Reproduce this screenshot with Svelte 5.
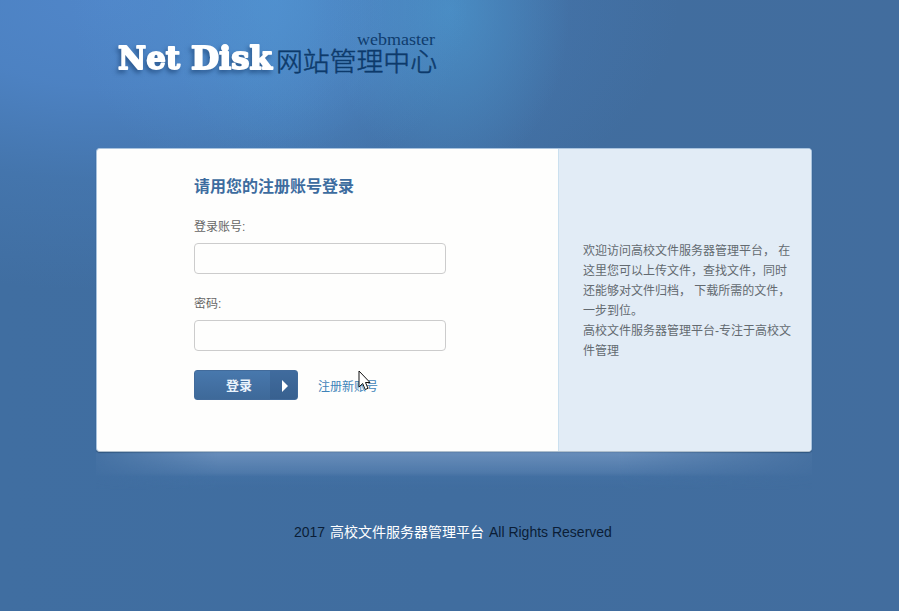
<script>
  const welcome = [
    '欢迎访问高校文件服务器管理平台， 在',
    '这里您可以上传文件，查找文件，同时',
    '还能够对文件归档， 下载所需的文件，',
    '一步到位。',
    '高校文件服务器管理平台-专注于高校文',
    '件管理'
  ];
  let account = $state('');
  let password = $state('');
</script>

<div class="page">
  <header>
    <svg class="logo" width="340" height="56" viewBox="0 0 340 56" aria-label="Net Disk">
      <g class="brand">
        <text x="11" y="41" textLength="62" lengthAdjust="spacingAndGlyphs">Net</text>
        <text x="84" y="41" textLength="81" lengthAdjust="spacingAndGlyphs">Disk</text>
      </g>
      <text class="master" x="250" y="17" textLength="78" lengthAdjust="spacingAndGlyphs">webmaster</text>
      <text class="center" x="169" y="43" textLength="161" lengthAdjust="spacingAndGlyphs">网站管理中心</text>
    </svg>
  </header>

  <main>
    <form onsubmit={(e) => e.preventDefault()}>
      <h1>请用您的注册账号登录</h1>
      <label for="account">登录账号:</label>
      <input id="account" type="text" bind:value={account} />
      <label for="password">密码:</label>
      <input id="password" type="password" bind:value={password} />
      <div class="actions">
        <button type="submit">
          <span>登录</span>
          <i><svg width="6" height="12" viewBox="0 0 6 12"><path d="M0 0L6 6L0 12Z" fill="#fff" /></svg></i>
        </button>
        <a href="#register">注册新账号</a>
      </div>
    </form>
    <aside>
      {#each welcome as line}
        <p>{line}</p>
      {/each}
    </aside>
  </main>
  <div class="reflection"></div>

  <footer><span>2017</span> <b>高校文件服务器管理平台</b> <span class="rights">All Rights Reserved</span></footer>

  <svg class="cursor" width="13" height="21" viewBox="0 0 13 21">
    <path d="M1 1V17L4.7 13.5L7.2 19.5L10 18.3L7.5 12.5H12Z" fill="#fff" stroke="#111" stroke-width="1" />
  </svg>
</div>

<style>
  :global(body) {
    margin: 0;
    overflow: hidden;
  }
  .page {
    position: relative;
    box-sizing: border-box;
    width: 899px;
    height: 611px;
    overflow: hidden;
    font-family: 'Liberation Sans', 'Noto Sans CJK SC', sans-serif;
    background:
      radial-gradient(ellipse 200px 190px at 270px 0, rgba(82, 148, 210, 0.6), transparent),
      radial-gradient(ellipse 110px 170px at 275px 0, rgba(76, 148, 208, 0.3), transparent),
      radial-gradient(ellipse 75px 150px at 275px 0, rgba(76, 148, 208, 0.2), transparent),
      radial-gradient(ellipse 120px 170px at 450px 10px, rgba(75, 148, 203, 0.75), transparent),
      radial-gradient(ellipse 570px 290px at 110px 0, #5086c9 0%, rgba(78, 132, 198, 0.9) 30%, rgba(72, 124, 184, 0.5) 62%, transparent 100%),
      linear-gradient(90deg, #406ea1, #406d9f 50%, #426d9e);
  }
  header {
    height: 148px;
    padding: 28px 0 0 107px;
    box-sizing: border-box;
  }
  .logo {
    display: block;
    overflow: visible;
  }
  .brand text {
    font: bold 31px 'DejaVu Serif', serif;
    fill: #fff;
    stroke: #fff;
    stroke-width: 1.8;
    stroke-linejoin: round;
  }
  .brand {
    filter: drop-shadow(-2px 3px 2px rgba(25, 65, 115, 0.6));
  }
  .master {
    font: 17px 'Liberation Serif', serif;
    fill: #0f3c6d;
  }
  .center {
    font: 300 26px 'Noto Sans CJK SC', sans-serif;
    fill: #0d3a6b;
    stroke: #0d3a6b;
    stroke-width: 0.5;
  }
  main {
    display: flex;
    box-sizing: border-box;
    width: 716px;
    height: 304px;
    margin-left: 96px;
    border: 1px solid #a9c3de;
    border-bottom-color: #b0bfcc;
    border-radius: 4px;
    overflow: hidden;
    background: #fefefd;
    box-shadow: 0 1px 1px #254c76;
  }
  form {
    flex: 1;
    padding: 24px 0 0 97px;
    display: flex;
    flex-direction: column;
  }
  h1 {
    margin: 0;
    height: 26px;
    font-size: 16px;
    line-height: 27px;
    color: #3d6c9f;
  }
  label {
    margin-top: 17px;
    height: 20px;
    font-size: 12px;
    line-height: 23px;
    color: #666;
  }
  input {
    box-sizing: border-box;
    width: 252px;
    height: 31px;
    margin: 7px 0 2px;
    padding: 0 8px;
    border: 1px solid #ccc;
    border-radius: 4px;
    background: transparent;
    outline: none;
  }
  .actions {
    display: flex;
    align-items: center;
    gap: 20px;
    margin-top: 17px;
  }
  button {
    display: flex;
    align-items: stretch;
    width: 104px;
    height: 30px;
    padding: 0;
    border: 1px solid #426b9b;
    border-radius: 3px;
    overflow: hidden;
    font: bold 13px/30px 'Liberation Sans', 'Noto Sans CJK SC', sans-serif;
    color: #e9f3fc;
    background: linear-gradient(#4878ad, #3e6999);
  }
  button span {
    width: 75px;
    padding-left: 13px;
    box-sizing: border-box;
  }
  button i {
    flex: 1;
    display: flex;
    align-items: center;
    padding-left: 12px;
    padding-top: 1px;
    background: rgba(42, 76, 120, 0.28);
  }
  a {
    font-size: 12px;
    line-height: 20px;
    padding-top: 3px;
    color: #4084b9;
    text-decoration: none;
  }
  aside {
    box-sizing: border-box;
    width: 253px;
    padding: 92px 0 0 24px;
    border-left: 1px solid #cbe0ef;
    background: #e2ecf6;
  }
  p {
    margin: 0;
    font-size: 12px;
    line-height: 20px;
    white-space: nowrap;
    color: #636a70;
  }
  .reflection {
    width: 716px;
    height: 38px;
    margin-left: 96px;
    background: linear-gradient(rgba(125, 158, 200, 0.68), rgba(95, 135, 182, 0.45) 55%, rgba(72, 120, 172, 0.25) 65%, transparent);
    mask-image: linear-gradient(90deg, rgba(0, 0, 0, 0.15), #000 17%, #000 73%, rgba(0, 0, 0, 0.15));
  }
  footer {
    margin-top: 32px;
    padding-left: 294px;
    font-size: 14px;
    line-height: 20px;
    white-space: nowrap;
    color: #0b1d36;
  }
  footer b {
    margin: 0 1px;
    font-weight: 400;
    color: #fff;
  }
  .cursor {
    position: absolute;
    left: 358px;
    top: 370px;
  }
</style>
